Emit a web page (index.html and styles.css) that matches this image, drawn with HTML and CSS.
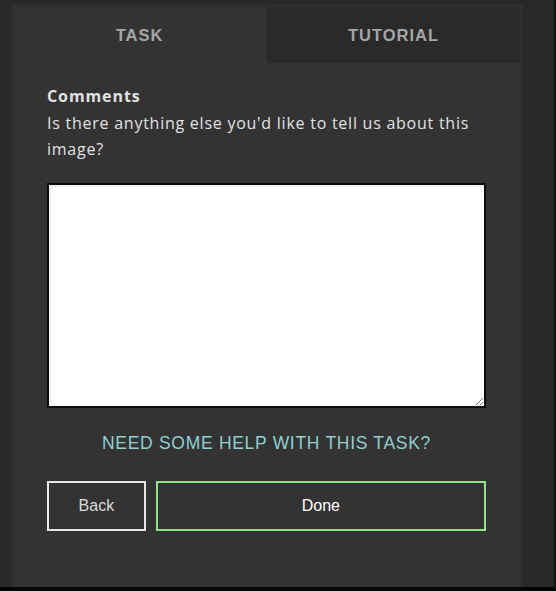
FILE: index.html
```html
<!DOCTYPE html>
<html>
<head>
<meta charset="utf-8">
<link rel="stylesheet" href="styles.css">
</head>
<body>
<div class="page">
  <div class="panel">
    <div class="tabs">
      <div class="tab tab-active">TASK</div>
      <div class="tab tab-inactive">TUTORIAL</div>
    </div>
    <div class="content">
      <div class="label">Comments</div>
      <div class="question">Is there anything else you'd like to tell us about this image?</div>
      <textarea class="comment-box"></textarea>
      <div class="help">NEED SOME HELP WITH THIS TASK?</div>
      <div class="actions">
        <button class="btn btn-back">Back</button>
        <button class="btn btn-done">Done</button>
      </div>
    </div>
  </div>
</div>
</body>
</html>
```
FILE: styles.css
```css
html, body {
  margin: 0;
  padding: 0;
  background: #111;
}
.page {
  box-sizing: border-box;
  width: 556px;
  height: 591px;
  background: #282828;
  border-right: 2px solid #121212;
  border-bottom: 4px solid #050505;
  padding: 4px 0 0 10px;
  overflow: hidden;
}
.panel {
  box-sizing: border-box;
  width: 513px;
  height: 583px;
  background: #333333;
  border: 3px solid #2e2e2e;
  border-bottom: none;
}
.tabs {
  display: flex;
  height: 56px;
}
.tab {
  flex: 1;
  display: flex;
  align-items: center;
  justify-content: center;
  font-family: "Liberation Sans", Arial, sans-serif;
  font-weight: bold;
  font-size: 16.5px;
  letter-spacing: 1px;
  color: #a6a6a6;
}
.tab-active {
  background: #333333;
}
.tab-inactive {
  background: #2a2a2a;
  margin-left: 1px;
}
.content {
  padding: 23px 34px 0;
}
.label {
  font-family: "Open Sans", sans-serif;
  font-weight: bold;
  font-size: 16px;
  line-height: 20px;
  color: #e2e2e2;
  letter-spacing: 0.9px;
}
.question {
  margin-top: 4px;
  font-family: "Open Sans", sans-serif;
  font-size: 16px;
  line-height: 26px;
  color: #e2e2e2;
  letter-spacing: 0.75px;
}
.comment-box {
  display: block;
  box-sizing: border-box;
  margin: 21px 0 0;
  width: 439px;
  height: 225px;
  border: 2px solid #0c0c0c;
  background: #ffffff;
  box-shadow: inset 2px 2px 3px rgba(0, 0, 0, 0.08);
  padding: 4px;
  outline: none;
}
.help {
  margin-top: 25px;
  text-align: center;
  font-family: "Liberation Sans", Arial, sans-serif;
  font-size: 17.5px;
  line-height: 20px;
  letter-spacing: 0.7px;
  color: #90cfd0;
}
.actions {
  display: flex;
  gap: 10px;
  margin-top: 28px;
}
.btn {
  box-sizing: border-box;
  height: 50px;
  background: transparent;
  font-family: "Liberation Sans", Arial, sans-serif;
  font-size: 16px;
  padding: 0;
}
.btn-back {
  width: 99px;
  border: 2px solid #e6e6e6;
  color: #d8d8d8;
}
.btn-done {
  width: 331px;
  border: 2px solid #8fe38a;
  color: #ffffff;
}
```
